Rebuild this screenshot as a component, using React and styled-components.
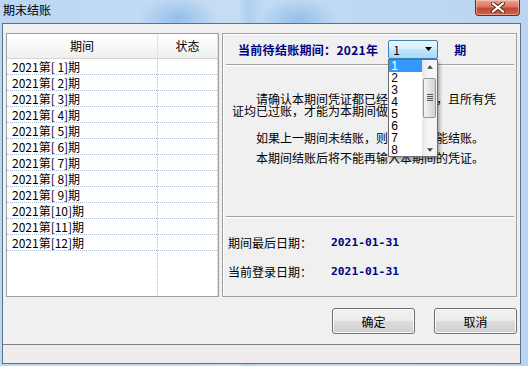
import React from "react";
import styled, { createGlobalStyle } from "styled-components";

const GlobalStyle = createGlobalStyle`
  html, body {
    margin: 0;
    padding: 0;
  }
  body {
    width: 528px;
    height: 366px;
    overflow: hidden;
    font-family: "Noto Sans CJK SC", sans-serif;
    font-size: 12px;
    color: #000;
  }
`;

const cjk = `"Noto Sans CJK SC", sans-serif`;

const Frame = styled.div`
  width: 528px;
  height: 366px;
  box-sizing: border-box;
  display: flex;
  flex-direction: column;
  padding: 0 7px 2px 2px;
  background:
    radial-gradient(ellipse 40px 22px at 178px 18px, #94bfe9 0%, rgba(148, 191, 233, 0) 100%),
    radial-gradient(ellipse 40px 22px at 298px 20px, #94bfe9 0%, rgba(148, 191, 233, 0) 100%),
    linear-gradient(to right, #bcd7f2 0%, #c6ddf4 45%, #aecfef 47%, #c3dbf3 50%, #bad5f1 100%);
`;

const TitleBar = styled.div`
  height: 23px;
  margin-left: -2px;
  margin-right: -7px;
  display: flex;
  justify-content: space-between;
  align-items: flex-start;
`;

const Title = styled.span`
  padding: 2px 0 0 3px;
  font-size: 12px;
  line-height: 16px;
  color: #000;
`;

const CloseButton = styled.div`
  width: 45px;
  height: 16px;
  margin-right: 8px;
  box-sizing: border-box;
  border: 1px solid #7a2417;
  border-top: none;
  border-radius: 0 0 4px 4px;
  background: linear-gradient(#e9a594 0%, #d9765f 45%, #c14a33 55%, #d2604a 100%);
  box-shadow: inset 0 0 0 1px rgba(255, 220, 210, 0.5);
  display: flex;
  align-items: center;
  justify-content: center;
`;

const Client = styled.div`
  flex: 1;
  display: flex;
  flex-direction: column;
  background: #f0f0f0;
  border: 1px solid #5f7186;
`;

const MainRow = styled.div`
  display: flex;
  gap: 3px;
  padding: 9px 3px 0 3px;
  height: 273px;
  box-sizing: border-box;
`;

const ListPanel = styled.div`
  width: 213px;
  height: 264px;
  box-sizing: border-box;
  border: 1px solid #a0a0a0;
  background: #fff;
  display: flex;
  flex-direction: column;
`;

const ListHeader = styled.div`
  display: flex;
  height: 25px;
  box-sizing: border-box;
  border-bottom: 1px solid #d5d5d5;
  background: linear-gradient(#ffffff 0%, #f7f7f7 60%, #eeeeee 100%);
`;

const HeaderCell = styled.div`
  width: ${(p) => p.$w}px;
  border-right: 1px solid #e2e2e2;
  display: flex;
  align-items: center;
  justify-content: center;
  font-size: 12px;
  line-height: 14px;
`;

const ListBody = styled.div`
  flex: 1;
  display: flex;
`;

const Column = styled.div`
  width: ${(p) => p.$w}px;
  border-right: 1px dotted #a9bcd1;
  display: flex;
  flex-direction: column;
`;

const Cell = styled.div`
  height: 16px;
  box-sizing: border-box;
  border-bottom: 1px dotted #a9bcd1;
  padding-left: 5px;
  font-size: 12px;
  line-height: 15px;
  white-space: pre;
`;

const InfoPanel = styled.div`
  width: 296px;
  height: 264px;
  box-sizing: border-box;
  border: 1px solid #a0a0a0;
  box-shadow: inset 1px 1px 0 #ffffff;
  display: flex;
  flex-direction: column;
`;

const PeriodBar = styled.div`
  height: 30px;
  display: flex;
  align-items: center;
  padding-left: 15px;
  font-family: ${cjk};
  font-weight: bold;
  font-size: 12px;
  color: #000080;
  letter-spacing: 0.3px;
`;

const Etched = styled.div`
  margin: 0 2px 0 3px;
  height: 0;
  border-top: 1px solid #a0a0a0;
  border-bottom: 1px solid #ffffff;
`;

const ComboWrap = styled.div`
  position: relative;
  margin: 0 16px 0 10px;
`;

const Combo = styled.div`
  width: 50px;
  height: 19px;
  box-sizing: border-box;
  border: 1px solid #3c7fb1;
  border-radius: 2px;
  background: linear-gradient(#eaf6fd 0%, #d9f0fc 45%, #bee6fd 50%, #a7d9f5 100%);
  display: flex;
  align-items: center;
  justify-content: space-between;
  padding: 0 5px 0 4px;
  font-weight: normal;
  color: #000;
  letter-spacing: 0;
`;

const DropList = styled.div`
  position: absolute;
  left: 0;
  top: 19px;
  width: 50px;
  height: 98px;
  box-sizing: border-box;
  border: 1px solid #6e6e6e;
  background: #fff;
  display: flex;
  box-shadow: 2px 3px 3px rgba(0, 0, 0, 0.3);
  z-index: 5;
`;

const Items = styled.div`
  width: 33px;
  display: flex;
  flex-direction: column;
`;

const Item = styled.div`
  height: 12px;
  line-height: 12px;
  padding-left: 2px;
  font-family: "Liberation Sans", sans-serif;
  font-weight: normal;
  font-size: 12px;
  letter-spacing: 0;
  background: ${(p) => (p.$active ? "#3399ff" : "transparent")};
  color: ${(p) => (p.$active ? "#fff" : "#000")};
`;

const ScrollBar = styled.div`
  width: 15px;
  background: linear-gradient(to right, #e6e6e6, #f4f4f4 40%, #f4f4f4);
  display: flex;
  flex-direction: column;
  align-items: center;
  justify-content: space-between;
  padding: 5px 0 4px;
  box-sizing: border-box;
  position: relative;
`;

const Thumb = styled.div`
  position: absolute;
  top: 18px;
  left: 1px;
  width: 11px;
  height: 38px;
  border: 1px solid #979797;
  border-radius: 2px;
  background: linear-gradient(to right, #f4f4f4, #e4e4e4 50%, #d2d2d2);
  display: flex;
  flex-direction: column;
  align-items: center;
  justify-content: center;
  gap: 1px;
`;

const Grip = styled.div`
  width: 6px;
  height: 1px;
  background: #555;
`;

const Message = styled.div`
  flex: 1;
  padding: 27px 0 0 9px;
  font-size: 12px;
  line-height: 12px;
`;

const Para = styled.p`
  margin: ${(p) => p.$top}px 0 0 0;
  width: 264px;
  text-indent: ${(p) => (p.$flush ? 0 : 24)}px;
  white-space: nowrap;
`;

const Dates = styled.div`
  height: 78px;
  box-sizing: border-box;
  padding: 14px 0 15px 5px;
  display: flex;
  flex-direction: column;
  gap: 9px;
`;

const DateRow = styled.div`
  height: 20px;
  display: flex;
  align-items: center;
`;

const DateLabel = styled.span`
  width: 103px;
  font-size: 12px;
`;

const DateValue = styled.span`
  font-family: "DejaVu Sans Mono", monospace;
  font-weight: bold;
  font-size: 11.3px;
  color: #000080;
`;

const ButtonRow = styled.div`
  height: 47px;
  display: flex;
  justify-content: flex-end;
  align-items: flex-start;
  gap: 19px;
  padding: 11px 3px 0 0;
  box-sizing: border-box;
`;

const Button = styled.button`
  width: 83px;
  height: 26px;
  border: 1px solid #707070;
  border-radius: 3px;
  background: linear-gradient(#f2f2f2 0%, #ebebeb 48%, #dddddd 52%, #cfcfcf 100%);
  box-shadow: inset 0 0 0 1px #fcfcfc;
  font-family: ${cjk};
  font-size: 12px;
  color: #000;
  padding: 0;
`;

const StatusBar = styled.div`
  height: 19px;
  box-sizing: border-box;
  border-top: 1px solid #808080;
  background: #f0ecec;
`;

const Triangle = ({ up, size = 7, color = "#000" }) => (
  <svg width={size} height={4} viewBox="0 0 7 4">
    <path d={up ? "M0 4 L3.5 0 L7 4 Z" : "M0 0 L7 0 L3.5 4 Z"} fill={color} />
  </svg>
);

const periods = Array.from({ length: 12 }, (_, i) =>
  `2021第[${String(i + 1).padStart(2, " ")}]期`
);

export default function App() {
  return (
    <>
      <GlobalStyle />
      <Frame>
        <TitleBar>
          <Title>期末结账</Title>
          <CloseButton>
            <svg width="14" height="11" viewBox="0 0 14 11">
              <path d="M2 1.5 L12 9.5 M12 1.5 L2 9.5" stroke="#5a1a10" strokeWidth="4" strokeLinecap="square" />
              <path d="M2 1.5 L12 9.5 M12 1.5 L2 9.5" stroke="#ffffff" strokeWidth="2.2" strokeLinecap="square" />
            </svg>
          </CloseButton>
        </TitleBar>
        <Client>
          <MainRow>
            <ListPanel>
              <ListHeader>
                <HeaderCell $w={150}>期间</HeaderCell>
                <HeaderCell $w={59}>状态</HeaderCell>
              </ListHeader>
              <ListBody>
                <Column $w={150}>
                  {periods.map((p) => (
                    <Cell key={p}>{p}</Cell>
                  ))}
                </Column>
                <Column $w={59}>
                  {periods.map((p) => (
                    <Cell key={p} />
                  ))}
                </Column>
              </ListBody>
            </ListPanel>
            <InfoPanel>
              <PeriodBar>
                当前待结账期间：2021年
                <ComboWrap>
                  <Combo>
                    <span>1</span>
                    <Triangle />
                  </Combo>
                  <DropList>
                    <Items>
                      {[1, 2, 3, 4, 5, 6, 7, 8].map((n) => (
                        <Item key={n} $active={n === 1}>{n}</Item>
                      ))}
                    </Items>
                    <ScrollBar>
                      <Triangle up size={6} color="#444" />
                      <Thumb>
                        <Grip />
                        <Grip />
                        <Grip />
                        <Grip />
                      </Thumb>
                      <Triangle size={6} color="#444" />
                    </ScrollBar>
                  </DropList>
                </ComboWrap>
                期
              </PeriodBar>
              <Etched />
              <Message>
                <Para $top={0}>请确认本期间凭证都已经转账审核，且所有凭</Para>
                <Para $top={0} $flush>证均已过账，才能为本期间做结账。</Para>
                <Para $top={15}>如果上一期间未结账，则本期间不能结账。</Para>
                <Para $top={8}>本期间结账后将不能再输入本期间的凭证。</Para>
              </Message>
              <Etched />
              <Dates>
                <DateRow>
                  <DateLabel>期间最后日期：</DateLabel>
                  <DateValue>2021-01-31</DateValue>
                </DateRow>
                <DateRow>
                  <DateLabel>当前登录日期：</DateLabel>
                  <DateValue>2021-01-31</DateValue>
                </DateRow>
              </Dates>
            </InfoPanel>
          </MainRow>
          <ButtonRow>
            <Button>确定</Button>
            <Button>取消</Button>
          </ButtonRow>
          <StatusBar />
        </Client>
      </Frame>
    </>
  );
}
